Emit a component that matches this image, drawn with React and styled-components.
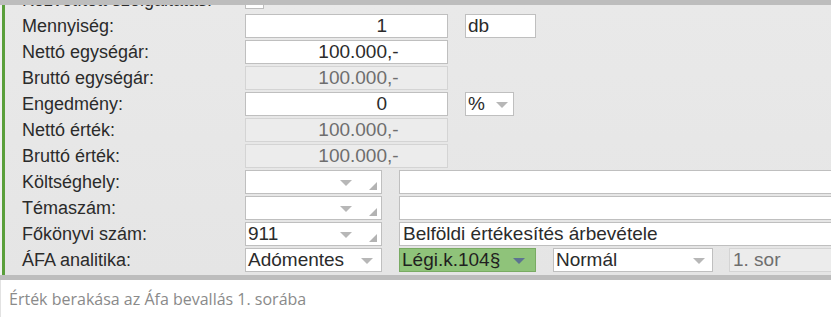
import React from 'react';
import styled, { createGlobalStyle, css } from 'styled-components';

const GlobalStyle = createGlobalStyle`
  body {
    margin: 0;
    background: #ffffff;
  }
`;

const Frame = styled.div`
  width: 831px;
  height: 317px;
  overflow: hidden;
  font-family: "Liberation Sans", Arial, sans-serif;
  font-size: 18px;
  color: #2b2b2b;
`;

const Bar = styled.div`
  height: 5px;
  background: #bdbdbd;
`;

const Shell = styled.div`
  padding-left: 2px;
  background: #f1f1f1;
`;

const Panel = styled.div`
  height: 270px;
  overflow: hidden;
  border-left: 3px solid #5a9f3b;
  background: linear-gradient(#e9e9e9, #e5e5e5);
`;

const Rows = styled.div`
  display: flex;
  flex-direction: column;
  gap: 2px;
  margin-top: -17px;
`;

const Row = styled.div`
  display: flex;
  align-items: center;
  height: 24px;
`;

const Label = styled.div`
  flex: 0 0 223px;
  padding-left: 17px;
  white-space: nowrap;
  line-height: 24px;
`;

const Gap = styled.div`
  flex: 0 0 ${(p) => p.$w || 17}px;
`;

const fieldBase = css`
  box-sizing: border-box;
  height: 24px;
  border: 1px solid ${(p) => (p.$disabled ? '#d4d4d4' : '#bfbfbf')};
  background: ${(p) => (p.$disabled ? '#ececec' : '#ffffff')};
  color: ${(p) => (p.$disabled ? '#6e6e6e' : '#2b2b2b')};
  font-size: 19px;
  line-height: 22px;
  white-space: nowrap;
  overflow: hidden;
`;

const Field = styled.div`
  ${fieldBase};
  flex: 0 0 ${(p) => p.$w}px;
  padding-left: 2px;
`;

const WideField = styled.div`
  ${fieldBase};
  flex: 1 0 auto;
  margin-right: -12px;
  padding-left: 3px;
`;

const NumberField = styled.div`
  ${fieldBase};
  flex: 0 0 203px;
  display: flex;
  justify-content: flex-end;
  padding-right: 47px;
`;

const Suffix = styled.span`
  display: inline-block;
  width: 13px;
`;

const Check = styled.div`
  box-sizing: border-box;
  width: 19px;
  height: 18px;
  border: 1px solid #bdbdbd;
  background: #ffffff;
`;

const SelectBox = styled.div`
  ${fieldBase};
  position: relative;
  flex: 0 0 ${(p) => p.$w}px;
  padding-left: 2px;
  ${(p) =>
    p.$green &&
    css`
      background: #8fc37a;
      border-color: #79ab63;
      color: #1f1f1f;
    `}
`;

const Arrow = styled.span`
  position: absolute;
  top: 9px;
  right: ${(p) => p.$right}px;
  width: 0;
  height: 0;
  border-left: 6px solid transparent;
  border-right: 6px solid transparent;
  border-top: 6px solid ${(p) => p.$color || '#b7b7b7'};
`;

const Grip = styled.span`
  position: absolute;
  right: 4px;
  bottom: 3px;
  width: 0;
  height: 0;
  border-left: 8px solid transparent;
  border-bottom: 8px solid #b3b3b3;
`;

const Footer = styled.div`
  height: 37px;
  display: flex;
  align-items: center;
  padding-left: 8px;
  border-left: 1px solid #e2e2e2;
  font-family: "Open Sans", "Noto Sans", sans-serif;
  font-size: 16px;
  color: #8a8a8a;
`;

const Select = ({ w, children, arrowRight, arrowColor, grip, green }) => (
  <SelectBox $w={w} $green={green}>
    {children}
    <Arrow $right={arrowRight} $color={arrowColor} />
    {grip && <Grip />}
  </SelectBox>
);

const Num = ({ value, suffix, disabled }) => (
  <NumberField $disabled={disabled}>
    {value}
    <Suffix>{suffix}</Suffix>
  </NumberField>
);

export default function App() {
  return (
    <Frame>
      <GlobalStyle />
      <Bar />
      <Shell>
        <Panel>
          <Rows>
            <Row>
              <Label>Közvetített szolgáltatás:</Label>
              <Check />
            </Row>
            <Row>
              <Label>Mennyiség:</Label>
              <Num value="1" />
              <Gap />
              <Field $w={71}>db</Field>
            </Row>
            <Row>
              <Label>Nettó egységár:</Label>
              <Num value="100.000" suffix=",-" />
            </Row>
            <Row>
              <Label>Bruttó egységár:</Label>
              <Num value="100.000" suffix=",-" disabled />
            </Row>
            <Row>
              <Label>Engedmény:</Label>
              <Num value="0" />
              <Gap />
              <Select w={49} arrowRight={5}>%</Select>
            </Row>
            <Row>
              <Label>Nettó érték:</Label>
              <Num value="100.000" suffix=",-" disabled />
            </Row>
            <Row>
              <Label>Bruttó érték:</Label>
              <Num value="100.000" suffix=",-" disabled />
            </Row>
            <Row>
              <Label>Költséghely:</Label>
              <Select w={137} arrowRight={29} grip />
              <Gap />
              <WideField />
            </Row>
            <Row>
              <Label>Témaszám:</Label>
              <Select w={137} arrowRight={29} grip />
              <Gap />
              <WideField />
            </Row>
            <Row>
              <Label>Főkönyvi szám:</Label>
              <Select w={137} arrowRight={29} grip>911</Select>
              <Gap />
              <WideField>Belföldi értékesítés árbevétele</WideField>
            </Row>
            <Row>
              <Label>ÁFA analitika:</Label>
              <Select w={137} arrowRight={8}>Adómentes</Select>
              <Gap />
              <Select w={137} arrowRight={10} arrowColor="#5d7391" green>
                Légi.k.104§
              </Select>
              <Gap />
              <Select w={160} arrowRight={7}>Normál</Select>
              <Gap $w={16} />
              <WideField $disabled>1. sor</WideField>
            </Row>
          </Rows>
        </Panel>
      </Shell>
      <Bar />
      <Footer>Érték berakása az Áfa bevallás 1. sorába</Footer>
    </Frame>
  );
}
